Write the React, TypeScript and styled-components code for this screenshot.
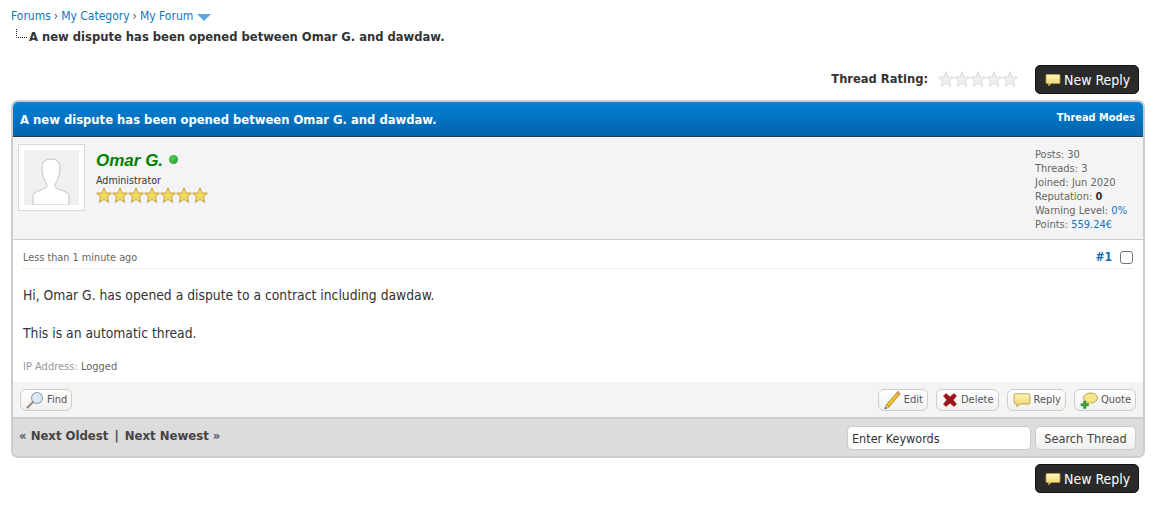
import React from "react";
import styled, { createGlobalStyle } from "styled-components";

// Icons -------------------------------------------------------------------------

const Bubble: React.FC<{ size?: number }> = ({ size = 16 }) => (
  <svg width={size} height={size} viewBox="0 0 16 16">
    <defs>
      <linearGradient id="bub" x1="0" y1="0" x2="0" y2="1">
        <stop offset="0" stopColor="#fdf6b8" />
        <stop offset="1" stopColor="#efd25f" />
      </linearGradient>
    </defs>
    <path
      d="M2 2.5h12a1 1 0 0 1 1 1v7a1 1 0 0 1-1 1H6l-2.5 2.5v-2.5H2a1 1 0 0 1-1-1v-7a1 1 0 0 1 1-1z"
      fill="url(#bub)"
      stroke="#b59a4a"
      strokeWidth="0.8"
    />
  </svg>
);

const StarShape: React.FC<{ fill: string; stroke: string; size: number }> = ({
  fill,
  stroke,
  size,
}) => (
  <svg width={size} height={size} viewBox="0 0 16 16">
    <path
      d="M8 .8l2.2 5 5.3.5-4 3.6 1.2 5.3L8 12.4l-4.7 2.8 1.2-5.3-4-3.6 5.3-.5z"
      fill={fill}
      stroke={stroke}
      strokeWidth="0.9"
    />
  </svg>
);

const Pencil = () => (
  <svg width="17" height="20" viewBox="0 0 17 20">
    <path d="M14 1.5L16 4 5 17 2.5 14.5z" fill="#f2c230" stroke="#a8801f" strokeWidth="0.9" />
    <path d="M14 1.5L16 4l-1.5 1.5-2-2.3z" fill="#e8a0a0" stroke="#a8801f" strokeWidth="0.6" />
    <path d="M2.5 14.5L5 17 .8 19z" fill="#f1dcb4" stroke="#8a6a2a" strokeWidth="0.6" />
    <path d="M.8 19l.7-2 1.3 1z" fill="#444" />
  </svg>
);

const Cross = () => (
  <svg width="16" height="16" viewBox="0 0 16 16">
    <path
      d="M1.5 4L4 1.5 8 5l4-3.5L14.5 4 11 8l3.5 4-2.5 2.5-4-3.5-4 3.5L1.5 12 5 8z"
      fill="#a3141c"
      stroke="#7c1015"
      strokeWidth="0.6"
    />
  </svg>
);

const QuoteIcon = () => (
  <svg width="18" height="18" viewBox="0 0 18 18">
    <ellipse cx="10.5" cy="7" rx="7" ry="5" fill="#f6e78a" stroke="#a99043" strokeWidth="0.8" />
    <path d="M5 10.5h8l-5 3z" fill="#f0d766" />
    <path d="M3.5 10H6v2.5h2.5V15H6v2.5H3.5V15H1v-2.5h2.5z" fill="#3aa335" stroke="#24751f" strokeWidth="0.4" />
  </svg>
);

const Magnifier = () => (
  <svg width="18" height="18" viewBox="0 0 18 18">
    <circle cx="11" cy="7" r="5.5" fill="#dce9f3" stroke="#8ca2b3" strokeWidth="1.1" />
    <path d="M7 11l-5.5 5.5" stroke="#9a8f82" strokeWidth="2.2" strokeLinecap="round" />
  </svg>
);

const Tree = () => (
  <svg width="12" height="10" viewBox="0 0 12 10">
    <path d="M.5 0v8.5H12" fill="none" stroke="#222" strokeDasharray="1 1" />
  </svg>
);

const Silhouette = () => (
  <svg width="55" height="55" viewBox="0 0 55 55">
    <rect width="55" height="55" fill="#f0f0f0" />
    <path
      d="M9 55V47c0-4 3-5 8-7 4-1.5 6-2 6-4.5 0-2-2.5-4-3.5-8-.8-3-1.5-5-1.5-10 0-6 4-8.5 9-8.5s9 2.5 9 8.5c0 5-.8 7-1.5 10-1 4-3.5 6-3.5 8 0 2.5 2 3 6 4.5 5 2 8 3 8 7v8z"
      fill="#fff"
      stroke="#b4b4b4"
      strokeWidth="0.8"
    />
  </svg>
);

// Component ---------------------------------------------------------------------

const App: React.FC = () => {
  const stats = [
    { label: "Posts:", value: "30" },
    { label: "Threads:", value: "3" },
    { label: "Joined:", value: "Jun 2020" },
    { label: "Reputation:", value: <b>0</b> },
    { label: "Warning Level:", value: <StatLink>0%</StatLink> },
    { label: "Points:", value: <StatLink>559.24€</StatLink> },
  ];

  return (
    <Page>
      <GlobalStyle />
      <Crumbs>
        <Crumb>Forums</Crumb> <Sep>›</Sep> <Crumb>My Category</Crumb> <Sep>›</Sep>{" "}
        <Crumb>My Forum</Crumb>
        <Caret />
      </Crumbs>
      <Active>
        <Tree />
        <span>A new dispute has been opened between Omar G. and dawdaw.</span>
      </Active>

      <RatingRow>
        <RatingLabel>Thread Rating:</RatingLabel>
        <Stars>
          {[0, 1, 2, 3, 4].map((i) => (
            <StarShape key={i} size={16} fill="#eeeeee" stroke="#d8d8d8" />
          ))}
        </Stars>
        <NewReply>
          <Bubble />
          New Reply
        </NewReply>
      </RatingRow>

      <Card>
        <CardHead>
          <CardTitle>A new dispute has been opened between Omar G. and dawdaw.</CardTitle>
          <Modes>Thread Modes</Modes>
        </CardHead>

        <Author>
          <Avatar>
            <Silhouette />
          </Avatar>
          <AuthorInfo>
            <NameRow>
              <Name>Omar G.</Name>
              <Online />
            </NameRow>
            <Role>Administrator</Role>
            <RoleStars>
              {[0, 1, 2, 3, 4, 5, 6].map((i) => (
                <StarShape key={i} size={16} fill="#f0da5c" stroke="#b9a03c" />
              ))}
            </RoleStars>
          </AuthorInfo>
          <Stats>
            {stats.map((s) => (
              <div key={s.label}>
                {s.label} {s.value}
              </div>
            ))}
          </Stats>
        </Author>

        <PostBody>
          <PostMeta>
            <span>Less than 1 minute ago</span>
            <PostNum>
              <PostLink>#1</PostLink>
              <Check />
            </PostNum>
          </PostMeta>
          <Message>
            Hi, Omar G. has opened a dispute to a contract including dawdaw.
            <br />
            <br />
            This is an automatic thread.
          </Message>
          <Ip>
            IP Address: <IpValue>Logged</IpValue>
          </Ip>
        </PostBody>

        <Controls>
          <PostBtn>
            <Magnifier />
            Find
          </PostBtn>
          <Right>
            <PostBtn>
              <Pencil />
              Edit
            </PostBtn>
            <PostBtn>
              <Cross />
              Delete
            </PostBtn>
            <PostBtn>
              <Bubble size={18} />
              Reply
            </PostBtn>
            <PostBtn>
              <QuoteIcon />
              Quote
            </PostBtn>
          </Right>
        </Controls>

        <Foot>
          <Pager>
            <Angle>«</Angle> Next Oldest <PagerSep>|</PagerSep> Next Newest <Angle>»</Angle>
          </Pager>
          <SearchForm>
            <Keywords defaultValue="Enter Keywords" />
            <SearchBtn>Search Thread</SearchBtn>
          </SearchForm>
        </Foot>
      </Card>

      <BottomRow>
        <NewReply>
          <Bubble />
          New Reply
        </NewReply>
      </BottomRow>
    </Page>
  );
};

export default App;

// Styled ------------------------------------------------------------------------

const GlobalStyle = createGlobalStyle`
  html, body {
    margin: 0;
    background: #fff;
  }
`;

const bodyFont = `"DejaVu Sans Condensed", "DejaVu Sans", sans-serif`;

const Page = styled.div`
  width: 1157px;
  height: 505px;
  overflow: hidden;
  box-sizing: border-box;
  padding: 9px 12px 0 11px;
  font-family: ${bodyFont};
  font-stretch: condensed;
  font-size: 12px;
  color: #333;
`;

const Crumbs = styled.div`
  display: flex;
  align-items: center;
  gap: 3px;
  height: 14px;
  font-size: 12px;
`;

const Crumb = styled.a`
  color: #0f76bd;
`;

const Sep = styled.span`
  color: #555;
`;

const Caret = styled.i`
  width: 0;
  height: 0;
  margin: 2px 0 0 1px;
  border-left: 7px solid transparent;
  border-right: 7px solid transparent;
  border-top: 7px solid #5aa6e0;
`;

const Active = styled.div`
  display: flex;
  align-items: flex-start;
  gap: 1px;
  margin: 5px 0 0 5px;
  height: 16px;
  padding-top: 1px;
  font-weight: 700;
  font-size: 12.87px;
  line-height: 16px;
  color: #333;
`;

const RatingRow = styled.div`
  display: flex;
  justify-content: flex-end;
  align-items: center;
  margin: 19px 6px 0 0;
  height: 30px;
`;

const RatingLabel = styled.span`
  margin: 0 10px 2px 0;
  font-weight: 700;
  font-size: 12.8px;
  color: #333;
`;

const Stars = styled.div`
  display: flex;
  margin: 0 17px 1px 0;
`;

const NewReply = styled.a`
  display: flex;
  align-items: center;
  gap: 3px;
  box-sizing: border-box;
  width: 104px;
  height: 29px;
  padding: 1px 0 0 9px;
  border: 1px solid #111;
  border-radius: 5px;
  background: #2a2a2a;
  color: #fff;
  font-size: 14px;
`;

const Card = styled.div`
  margin-top: 6px;
  box-sizing: border-box;
  width: 1134px;
  height: 358px;
  border: 2px solid #ccc;
  border-radius: 7px;
  background: #fff;
  overflow: hidden;
`;

const CardHead = styled.div`
  display: flex;
  justify-content: space-between;
  align-items: flex-start;
  box-sizing: border-box;
  height: 35px;
  padding: 9px 8px 0 7px;
  background: linear-gradient(#0482d6, #0063ac);
  border-bottom: 1px solid #263c4a;
  color: #fff;
  font-weight: 700;
`;

const CardTitle = styled.div`
  padding-top: 1px;
  font-size: 12.9px;
  line-height: 16px;
`;

const Modes = styled.div`
  font-size: 10.9px;
  line-height: 14px;
`;

const Author = styled.div`
  display: flex;
  box-sizing: border-box;
  height: 103px;
  padding: 7px 5px 0 5px;
  background: #f4f4f4;
  border-bottom: 1px solid #ccc;
`;

const Avatar = styled.div`
  box-sizing: border-box;
  width: 67px;
  height: 67px;
  padding: 5px;
  background: #fff;
  border: 1px solid #d8d8d8;
`;

const AuthorInfo = styled.div`
  margin-left: 11px;
  flex: 1;
`;

const NameRow = styled.div`
  display: flex;
  align-items: center;
  gap: 6px;
  height: 22px;
  margin-top: 6px;
`;

const Name = styled.span`
  font-family: "Liberation Sans", Arial, sans-serif;
  font-stretch: normal;
  font-weight: 700;
  font-style: italic;
  font-size: 17px;
  color: #008000;
`;

const Online = styled.i`
  width: 9px;
  height: 9px;
  margin-bottom: 3px;
  border-radius: 50%;
  background: radial-gradient(circle at 40% 35%, #56cf56, #1b962b);
`;

const Role = styled.div`
  margin-top: 1px;
  font-size: 10.6px;
  line-height: 14px;
  color: #333;
`;

const RoleStars = styled.div`
  display: flex;
`;

const Stats = styled.div`
  width: 103px;
  margin-top: 4px;
  font-size: 11px;
  line-height: 14px;
  color: #666;

  b {
    color: #333;
  }
`;

const StatLink = styled.span`
  color: #0f76bd;
`;

const PostBody = styled.div`
  box-sizing: border-box;
  height: 142px;
  padding: 0 10px;
  background: #fff;
`;

const PostMeta = styled.div`
  display: flex;
  justify-content: space-between;
  align-items: center;
  box-sizing: border-box;
  height: 29px;
  padding-top: 6px;
  border-bottom: 1px dotted #ddd;
  font-size: 10.8px;
  color: #666;
`;

const PostNum = styled.div`
  display: flex;
  align-items: center;
  gap: 8px;
`;

const PostLink = styled.a`
  font-weight: 700;
  font-size: 12px;
  color: #0f6db5;
`;

const Check = styled.i`
  box-sizing: border-box;
  width: 13px;
  height: 13px;
  border: 1px solid #767676;
  border-radius: 3px;
  background: #fff;
`;

const Message = styled.div`
  margin-top: 17px;
  font-size: 13.77px;
  line-height: 19px;
  color: #333;
`;

const Ip = styled.div`
  margin-top: 17px;
  font-size: 11px;
  line-height: 14px;
  color: #999;
`;

const IpValue = styled.span`
  color: #666;
`;

const Controls = styled.div`
  display: flex;
  justify-content: space-between;
  align-items: center;
  box-sizing: border-box;
  height: 37px;
  padding: 0 7px;
  background: #f4f4f4;
  border-bottom: 2px solid #ccc;
`;

const Right = styled.div`
  display: flex;
  gap: 8px;
`;

const PostBtn = styled.a`
  display: flex;
  align-items: center;
  gap: 3px;
  box-sizing: border-box;
  height: 22px;
  padding: 0 4px 0 5px;
  background: linear-gradient(#fff, #f0f0f0);
  border: 1px solid #ccc;
  border-radius: 6px;
  font-size: 11px;
  color: #555;
`;

const Foot = styled.div`
  display: flex;
  justify-content: space-between;
  align-items: center;
  box-sizing: border-box;
  height: 37px;
  padding: 0 7px 0 6px;
  background: #dcdcdc;
`;

const Pager = styled.div`
  margin-bottom: 4px;
  font-weight: 700;
  font-size: 13px;
  color: #444;
`;

const Angle = styled.span`
  color: #556;
`;

const PagerSep = styled.span`
  margin: 0 2px;
`;

const SearchForm = styled.div`
  display: flex;
  gap: 4px;
`;

const Keywords = styled.input`
  box-sizing: border-box;
  width: 184px;
  height: 24px;
  padding: 1px 4px 0;
  border: 1px solid #ccc;
  border-radius: 5px;
  outline: none;
  background: #fff;
  font-family: ${bodyFont};
  font-stretch: condensed;
  font-size: 12.5px;
  color: #333;
`;

const SearchBtn = styled.button`
  box-sizing: border-box;
  width: 101px;
  height: 24px;
  padding: 1px 0 0;
  border: 1px solid #ccc;
  border-radius: 5px;
  background: linear-gradient(#fff, #efefef);
  font-family: ${bodyFont};
  font-stretch: condensed;
  font-size: 12.7px;
  color: #444;
`;

const BottomRow = styled.div`
  display: flex;
  justify-content: flex-end;
  margin: 6px 6px 0 0;
`;
